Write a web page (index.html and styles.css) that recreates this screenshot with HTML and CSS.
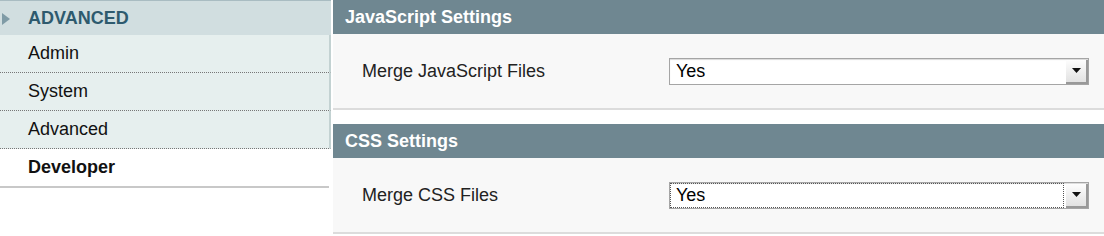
FILE: index.html
```html
<!DOCTYPE html>
<html lang="en">
<head>
    <meta charset="UTF-8">
    <title>Configuration - Developer</title>
    <link rel="stylesheet" href="styles.css">
</head>
<body>
    <div class="page">
        <div class="side-nav">
            <div class="nav-title"><span class="nav-arrow"></span>ADVANCED</div>
            <ul class="nav-list">
                <li>Admin</li>
                <li>System</li>
                <li>Advanced</li>
                <li class="active">Developer</li>
            </ul>
        </div>

        <div class="main">
            <div class="section">
                <div class="section-head">JavaScript Settings</div>
                <div class="section-body">
                    <label class="field-label">Merge JavaScript Files</label>
                    <div class="select">
                        <div class="select-value">Yes</div>
                        <div class="select-arrow"><svg width="9" height="5" viewBox="0 0 9 5"><path d="M0 0h9L4.5 5z" fill="#111"/></svg></div>
                    </div>
                </div>
            </div>
            <div class="section">
                <div class="section-head">CSS Settings</div>
                <div class="section-body">
                    <label class="field-label">Merge CSS Files</label>
                    <div class="select focused">
                        <div class="select-value">Yes</div>
                        <div class="select-arrow"><svg width="9" height="5" viewBox="0 0 9 5"><path d="M0 0h9L4.5 5z" fill="#111"/></svg></div>
                    </div>
                </div>
            </div>
        </div>
    </div>
</body>
</html>
```

FILE: styles.css
```css
body {
    margin: 0;
    padding: 0;
    background-color: #fff;
    font-family: "Liberation Sans", Arial, sans-serif;
    color: #222;
}
.page {
    display: flex;
    align-items: flex-start;
}
.side-nav {
    width: 331px;
    flex-shrink: 0;
}
.nav-title {
    height: 34px;
    border-top: 1px solid #a9bcc2;
    background-color: #d1dee0;
    color: #2e5a6e;
    font-size: 18px;
    font-weight: bold;
    display: flex;
    align-items: center;
    padding-left: 28px;
    position: relative;
}
.nav-arrow {
    position: absolute;
    left: 2px;
    top: 12px;
    width: 0;
    height: 0;
    border-top: 6px solid transparent;
    border-bottom: 6px solid transparent;
    border-left: 8px solid #7f9ba6;
}
.nav-list {
    list-style: none;
    margin: 0;
    padding: 0;
}
.nav-list li {
    height: 37px;
    padding-left: 28px;
    display: flex;
    align-items: center;
    font-size: 18px;
    color: #111;
    background-color: #e6efee;
    border-bottom: 1px dotted #777;
    border-right: 2px solid #c3d2d2;
}
.nav-list li.active {
    background-color: #fff;
    font-weight: bold;
    border-bottom: 2px solid #c8c8c8;
    border-right: none;
    margin-right: 2px;
}
.main {
    flex: 1;
    margin-left: 2px;
}
.section {
    margin-bottom: 14px;
}
.section:last-child {
    margin-bottom: 0;
}
.section-head {
    height: 34px;
    background-color: #6f8791;
    color: #fff;
    font-size: 18px;
    font-weight: bold;
    display: flex;
    align-items: center;
    padding-left: 12px;
}
.section-body {
    height: 74px;
    background-color: #f8f8f8;
    border-bottom: 2px solid #dcdcdc;
    display: flex;
    align-items: center;
    padding-left: 29px;
}
.field-label {
    width: 307px;
    font-size: 18px;
    color: #222;
}
.select {
    width: 418px;
    height: 25px;
    display: flex;
    border: 1px solid #a5a5a5;
    background-color: #fff;
    box-shadow: inset 0 1px 1px rgba(0, 0, 0, 0.15);
}
.select-value {
    flex: 1;
    padding-left: 6px;
    font-size: 18px;
    color: #000;
    display: flex;
    align-items: center;
}
.select.focused .select-value {
    outline: 1px dotted #555;
    outline-offset: -1px;
}
.select-arrow {
    width: 20px;
    margin: 1px 0 0 2px;
    display: flex;
    align-items: center;
    justify-content: center;
    background: linear-gradient(#fdfdfd, #e2e2e2);
    border-right: 2px solid #999;
    border-bottom: 2px solid #999;
}
```
